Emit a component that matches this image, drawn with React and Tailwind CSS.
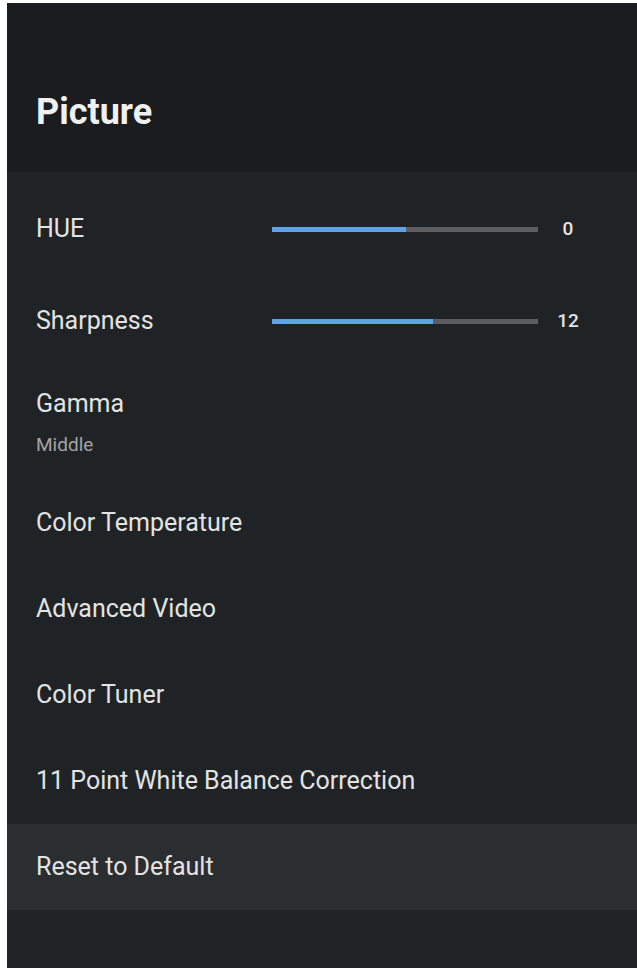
const ROWS = [
  { label: "Color Temperature" },
  { label: "Advanced Video" },
  { label: "Color Tuner" },
  { label: "11 Point White Balance Correction" },
];

function SliderRow({ label, value, pct }) {
  return (
    <div className="flex h-[92px] items-center pl-[29px]">
      <span className="w-[236px] text-[25px] text-[#e3e3e3]">{label}</span>
      <div className="relative h-[5px] w-[266px] bg-[#5b5d5f]">
        <div className="absolute inset-y-0 left-0 bg-[#5ea3ea]" style={{ width: `${pct}%` }} />
      </div>
      <span className="ml-[15px] w-[30px] text-center text-[19px] font-medium text-[#e3e3e3]">{value}</span>
    </div>
  );
}

export default function App() {
  return (
    <div className="h-[968px] w-[637px] bg-white pl-[7px] pt-[3px]" style={{ fontFamily: "Roboto, 'Noto Sans', sans-serif" }}>
      <div className="flex h-full flex-col bg-[#202326]">
        {/* header */}
        <div className="flex h-[169px] items-center bg-[#1a1c1f] pl-[29px] pt-[48px]">
          <h1 className="text-[36px] font-bold text-[#f0f0f0]">Picture</h1>
        </div>

        {/* list */}
        <div className="flex flex-col pt-[11px]">
          <SliderRow label="HUE" value="0" pct={50.5} />
          <SliderRow label="Sharpness" value="12" pct={60.5} />

          <div className="flex h-[113px] flex-col justify-center pb-[2px] pl-[29px]">
            <span className="text-[25px] leading-[30px] text-[#e3e3e3]">Gamma</span>
            <span className="mt-[15px] text-[19px] leading-[22px] text-[#a3a3a3]">Middle</span>
          </div>

          {ROWS.map((r) => (
            <div key={r.label} className="flex h-[86px] items-center pl-[29px]">
              <span className="text-[25px] text-[#e3e3e3]">{r.label}</span>
            </div>
          ))}

          <div className="flex h-[86px] items-center bg-[#2b2e31] pl-[29px]">
            <span className="text-[25px] text-[#e3e3e3]">Reset to Default</span>
          </div>
        </div>
      </div>
    </div>
  );
}
